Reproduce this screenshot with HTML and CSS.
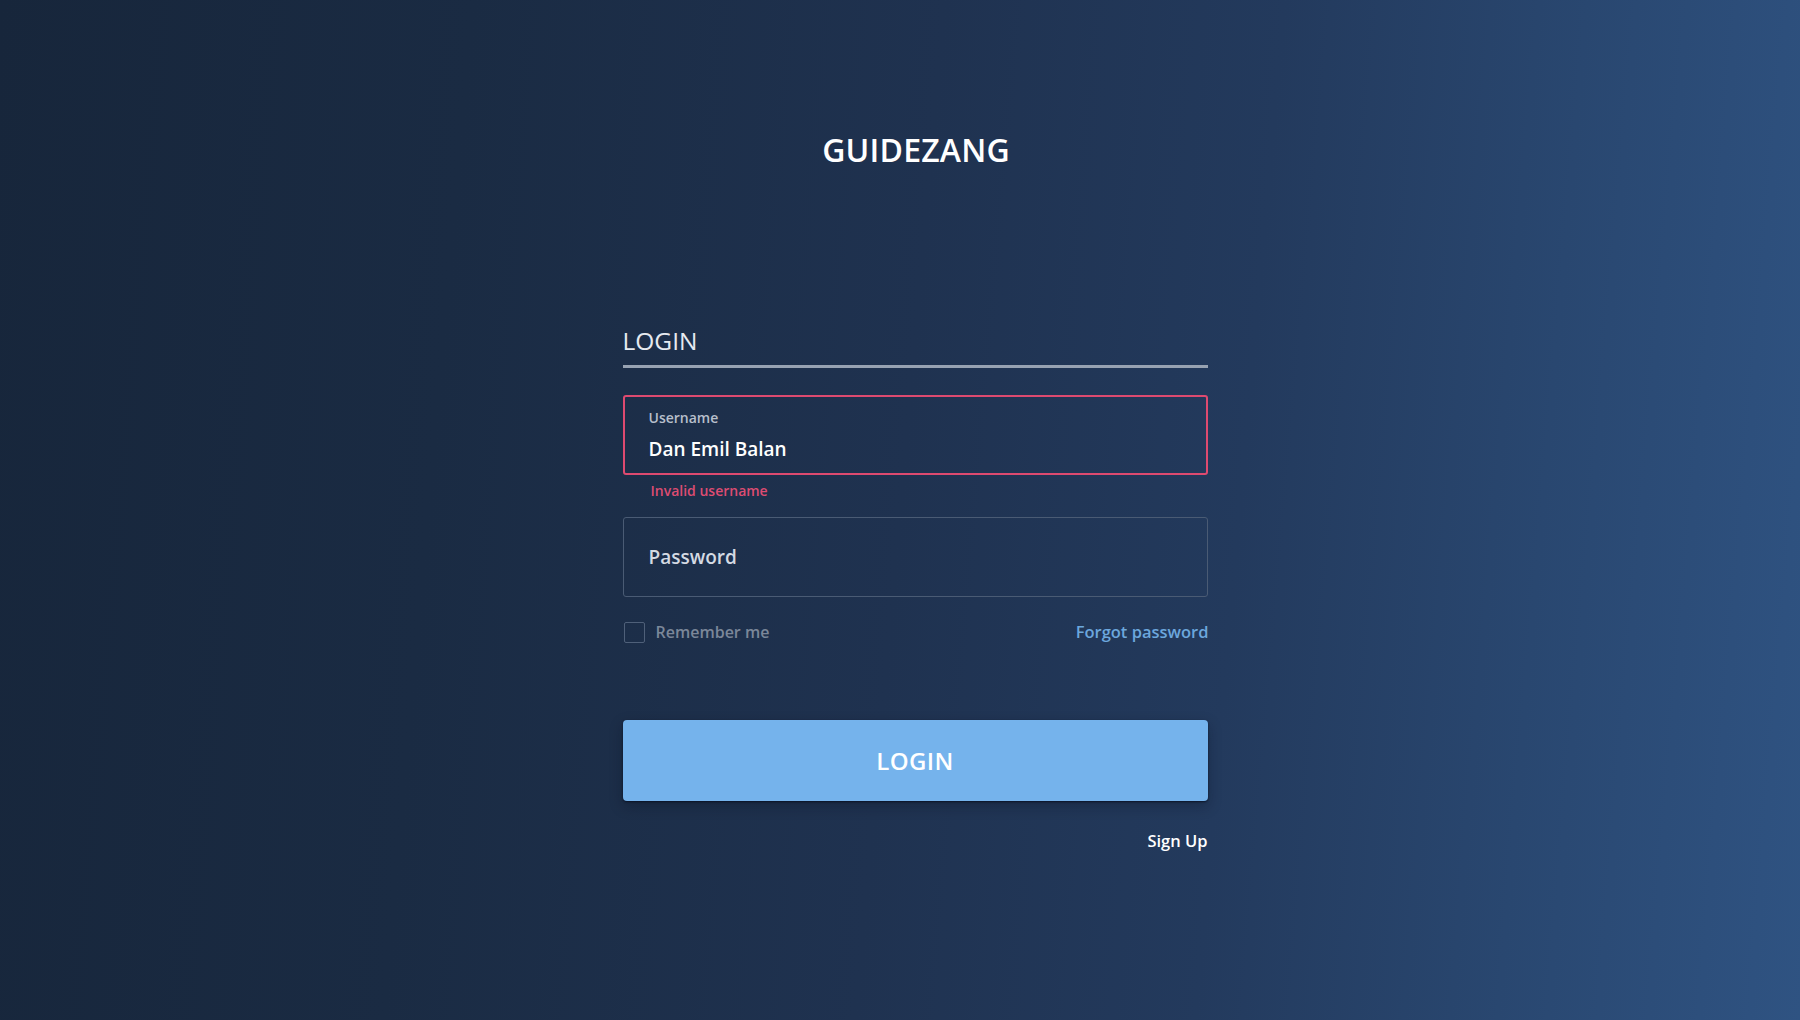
FILE: index.html
```html
<!DOCTYPE html>
<html lang="en">
<head>
<meta charset="utf-8">
<title>Guidezang — Login</title>
<link rel="stylesheet" href="styles.css">
</head>
<body>
<main class="page">
  <h1 class="brand">GUIDEZANG</h1>
  <form class="login-form" onsubmit="return false">
    <h2 class="form-title">LOGIN</h2>
    <label class="field field-error">
      <span class="field-label">Username</span>
      <input class="field-input" type="text" value="Dan Emil Balan">
    </label>
    <p class="field-message">Invalid username</p>
    <label class="field field-plain">
      <input class="field-input field-input-placeholder" type="password" placeholder="Password">
    </label>
    <div class="options-row">
      <label class="remember">
        <span class="checkbox"></span>
        <span class="remember-text">Remember me</span>
      </label>
      <a class="forgot" href="#">Forgot password</a>
    </div>
    <button class="login-button" type="submit">LOGIN</button>
    <div class="signup-row">
      <a class="signup" href="#">Sign Up</a>
    </div>
  </form>
</main>
</body>
</html>
```
FILE: styles.css
```css
* {
  box-sizing: border-box;
}

html, body {
  margin: 0;
  height: 100%;
}

body {
  font-family: "Open Sans", "Noto Sans", "Liberation Sans", sans-serif;
  color: #ffffff;
  background: linear-gradient(95deg, #17263b 0%, #1a2b43 25%, #1f3250 50%, #233a5d 68%, #294770 84%, #2f5382 100%);
  overflow: hidden;
}

.page {
  height: 100%;
  display: flex;
  flex-direction: column;
  align-items: center;
  padding-top: 130px;
  padding-left: 32px;
}

.brand {
  margin: 0;
  font-size: 32px;
  line-height: 40px;
  font-weight: 600;
  letter-spacing: 0.2px;
  color: #ffffff;
}

.login-form {
  width: 585px;
  margin-top: 155px;
  margin-left: -2px;
  display: flex;
  flex-direction: column;
}

.form-title {
  margin: 0;
  font-size: 24.5px;
  line-height: 30px;
  font-weight: 400;
  color: #e6eaf0;
  padding-bottom: 9px;
  border-bottom: 3px solid #97a2b2;
  padding-top: 1px;
}

.field {
  display: flex;
  flex-direction: column;
  height: 80px;
  border-radius: 3px;
  padding-left: 25px;
  padding-right: 24px;
}

.field-error {
  margin-top: 27px;
  border: 2px solid #de4a70;
  padding-top: 12px;
  padding-left: 24px;
}

.field-plain {
  margin-top: 17px;
  border: 1px solid #4a5b74;
  justify-content: center;
}

.field-label {
  font-size: 14px;
  line-height: 18px;
  font-weight: 600;
  color: #b7bfcb;
}

.field-input {
  margin: 10px 0 0;
  padding: 0;
  border: 0;
  outline: none;
  background: transparent;
  font-family: inherit;
  font-size: 19px;
  line-height: 24px;
  height: 24px;
  font-weight: 600;
  color: #ffffff;
  width: 100%;
}

.field-input-placeholder {
  margin-top: 0;
}

.field-input-placeholder::placeholder {
  color: #d4dae3;
  opacity: 1;
  font-weight: 600;
}

.field-message {
  margin: 7px 0 0 28px;
  font-size: 14px;
  line-height: 18px;
  font-weight: 600;
  color: #dd4c72;
}

.options-row {
  margin-top: 24px;
  height: 22px;
  display: flex;
  align-items: center;
  justify-content: space-between;
}

.remember {
  display: flex;
  align-items: center;
  gap: 11px;
}

.checkbox {
  width: 21px;
  height: 21px;
  border: 1.5px solid #4f6079;
  border-radius: 2px;
  margin-left: 1px;
}

.remember-text {
  font-size: 16px;
  line-height: 20px;
  font-weight: 600;
  color: #7b8799;
}

.forgot {
  font-size: 16.5px;
  line-height: 20px;
  font-weight: 600;
  color: #6ca7dd;
  text-decoration: none;
  margin-right: -1px;
}

.login-button {
  margin-top: 77px;
  height: 81px;
  border: 0;
  border-radius: 4px;
  background: #75b3ec;
  color: #ffffff;
  font-family: inherit;
  font-size: 24px;
  font-weight: 600;
  letter-spacing: 0.4px;
  box-shadow: 0 1px 2px rgba(5, 12, 25, 0.7), 0 5px 14px rgba(5, 12, 25, 0.3);
  cursor: pointer;
}

.signup-row {
  margin-top: 30px;
  display: flex;
  justify-content: flex-end;
}

.signup {
  font-size: 16.5px;
  line-height: 20px;
  font-weight: 600;
  color: #ffffff;
  text-decoration: none;
}
```
